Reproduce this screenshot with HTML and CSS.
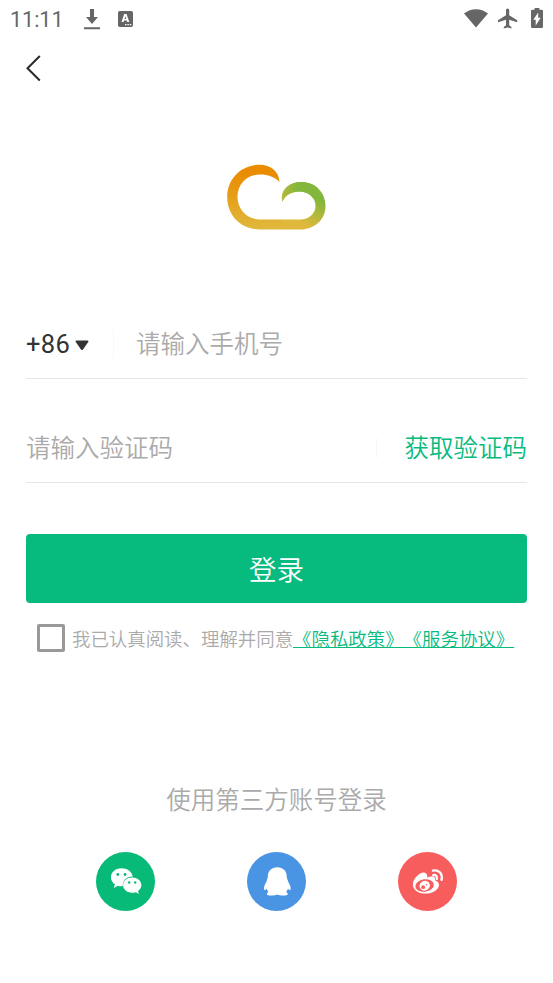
FILE: index.html
```html
<!DOCTYPE html>
<html lang="zh-CN">
<head>
<meta charset="utf-8">
<title>登录</title>
<link rel="stylesheet" href="styles.css">
</head>
<body>
<header class="status">
  <span class="clock">11:11</span>
  <svg class="download" width="16" height="21" viewBox="0 0 16 21"><path d="M6 0h4v8h4l-6 7-6-7h4zM0 18.2h16v2H0z"/></svg>
  <svg class="lang" width="15" height="16" viewBox="0 0 15 16"><rect width="15" height="16" rx="1.8"/><path class="cut" d="M6.2 3h2.3l2.8 8H9.2l-.5-1.6H6L5.500 11h-2zM7.300 5.200 6.500 8h1.700z"/><path class="cut" d="M7 13h1.500v1.300H7zm2.400 0h1.500v1.300H9.400zm2.400 0h1.500v1.300h-1.500z"/></svg>
  <span class="system">
    <svg width="24" height="19" viewBox="0 0 24 19"><path d="M0 4.500C7-1.300 17-1.300 24 4.500L12 18.500z"/></svg>
    <svg width="21" height="21" viewBox="0 0 21 21"><path d="M20.200 14.300v-2l-8-5V2.100a1.600 1.600 0 0 0-3.200 0v5.200l-8 5v2L9 11.800v5.500l-2.200 1.600v1.500l3.800-1 3.800 1v-1.500l-2.200-1.600v-5.500z"/></svg>
    <svg width="12" height="20" viewBox="0 0 12 20"><path d="M3.600 0h4.800v1.800h2.300A1.300 1.300 0 0 1 12 3.100v15.600a1.300 1.300 0 0 1-1.300 1.300H1.300A1.300 1.300 0 0 1 0 18.700V3.100a1.300 1.300 0 0 1 1.300-1.300h2.300z"/><path class="cut" d="M7.200 4.500v5.300h2.500L4.700 17.500v-5.700H2.300z"/></svg>
  </span>
</header>
<nav class="nav"><svg width="16" height="28" viewBox="0 0 16 28"><path d="M14.800 2 2.500 14.300 14.800 26.500"/></svg></nav>
<main>
  <svg class="logo" width="120" height="85" viewBox="0 0 120 85">
    <defs>
      <linearGradient id="warm" x1="0" y1="10" x2="0" y2="74" gradientUnits="userSpaceOnUse"><stop offset=".12" stop-color="#e98c00"/><stop offset="1" stop-color="#e0b93c"/></linearGradient>
      <linearGradient id="fresh" x1="100" y1="42" x2="85" y2="68" gradientUnits="userSpaceOnUse"><stop offset="0" stop-color="#83b73b"/><stop offset="1" stop-color="#e0b93c"/></linearGradient>
      <linearGradient id="fade" x1="64" y1="0" x2="94" y2="0" gradientUnits="userSpaceOnUse"><stop offset="0" stop-color="#c0b83b"/><stop offset=".55" stop-color="#83b73b"/></linearGradient>
      <clipPath id="tip"><path d="M64 25h38v18H86v6H64z"/></clipPath>
      <path id="right" d="M65 74.500h19c15 0 25.500-10 25.500-23.500C109.500 37 99 27 85 27 72 27 63.500 37 66.500 46.500 69 40 76 36.500 83 36.500c10 0 16.500 6.500 16.500 14.500 0 7.500-6.500 13.500-15.500 13.500H65z"/>
    </defs>
    <path fill="url(#warm)" d="M63.500 27C63 16 54 9.800 44 9.800 25 9.800 11.200 24 11.200 42c0 18.500 13.800 32.500 32.800 32.500h21.500v-10H44C31 64.500 21.500 54 21.500 42 21.500 29 31 19.500 44 19.500c8 0 15 2.500 19.500 7.500z"/>
    <use href="#right" fill="url(#fresh)"/>
    <use href="#right" fill="url(#fade)" clip-path="url(#tip)"/>
  </svg>
  <form class="form">
    <div class="field">
      <span class="code">+86</span>
      <svg class="caret" width="14" height="11" viewBox="0 0 14 11"><path d="M1.500.5h11c1 0 1.300.9.700 1.600L8 9.400c-.6.800-1.400.8-2 0L.8 2.100C.2 1.400.5.500 1.500.5z"/></svg>
      <span class="rule phone-rule"></span>
      <span class="hint">请输入手机号</span>
    </div>
    <div class="field verify">
      <span class="hint">请输入验证码</span>
      <span class="rule verify-rule"></span>
      <span class="get">获取验证码</span>
    </div>
    <div class="login">登录</div>
    <div class="agree"><span class="box"></span><span>我已认真阅读、理解并同意</span><a>《隐私政策》《服务协议》</a></div>
  </form>
  <p class="other">使用第三方账号登录</p>
  <div class="social">
    <span class="round wechat"><svg width="59" height="59" viewBox="0 0 59 59"><path class="w" d="M25.500 16.200c-6.200 0-10.600 4-10.600 9 0 3 1.600 5.500 4 7.100L17.800 36l4.100-2.300c1.500.5 3 .6 4.900.4-.5-6 4-9.800 10-9.700-.9-4.800-5.500-8.200-11.300-8.200z"/><path class="w" d="M36.200 25.400c-5.300 0-9.200 3.400-9.200 7.700s3.900 7.700 9.200 7.700c1.300 0 2.500-.2 3.600-.6l3.100 1.900-.9-3.200c2.200-1.400 3.400-3.500 3.400-5.800 0-4.300-4-7.700-9.200-7.700z"/><g fill="#07ba78"><circle cx="21.800" cy="22.500" r="1.400"/><circle cx="29" cy="22.500" r="1.400"/><circle cx="33.200" cy="30.500" r="1.200"/><circle cx="39.200" cy="30.500" r="1.200"/></g></svg></span>
    <span class="round qq"><svg width="59" height="59" viewBox="0 0 59 59"><path class="w" d="M30.300 15.300c-6 0-9.800 4.200-9.500 10.200-.2 1.500-1.200 2.300-1.200 4-2 3-3 6-2.500 8 .4 1.200 1.600.3 2.500-1.100.3 1.300.9 2.500 1.900 3.500-2.300 1-2.300 3.300.7 3.500 3 .3 6 .1 8.100-1 2.100 1.100 5.200 1.300 8.100 1 3-.2 3-2.500.7-3.500 1-1 1.600-2.200 1.900-3.500.9 1.400 2.100 2.300 2.500 1.100.5-2-.5-5-2.500-8 0-1.700-1-2.500-1.200-4 .3-6-3.500-10.200-9.500-10.200z"/></svg></span>
    <span class="round weibo"><svg width="59" height="59" viewBox="0 0 59 59"><path class="w" d="M27.700 21.200c-1.900-1.800-6.700.3-9.900 4.100-6.200 7.300-2 16.300 9.500 16.300 8 0 13.700-4.500 13.700-8.700 0-2.500-1.900-3.900-4-4.600.9-3.200-1.300-5-7.900-2.600.6-2 .1-3.500-1.400-4.500z"/><ellipse cx="26.600" cy="33.500" rx="9.300" ry="6.200" fill="#f85d5d" transform="rotate(-7 26.600 33.500)"/><ellipse class="w" cx="26.700" cy="33.700" rx="5.300" ry="4.800" transform="rotate(-20 26.700 33.700)"/><circle cx="25.200" cy="35.200" r="1.900" fill="#f85d5d"/><circle cx="28.400" cy="32.700" r=".8" fill="#f85d5d"/><path class="arc" d="M34.800 18.600c5.500-1.200 10.300 3 8.700 9.300M35.200 23.200c2.500-.7 4.300 1 3.600 3.700"/></svg></span>
  </div>
</main>
</body>
</html>
```
FILE: styles.css
```css
* { box-sizing: border-box; }
body {
  margin: 0;
  height: 983px;
  overflow: hidden;
  background: #fff;
  color: #333;
  font-family: Roboto, "Noto Sans CJK SC", sans-serif;
  text-spacing-trim: space-all;
}
svg { display: block; flex: none; }
.status {
  display: flex;
  align-items: center;
  height: 38px;
  padding: 0 10px;
  fill: #666;
}
.clock { width: 53px; padding-top: 1px; font-size: 21.5px; line-height: 38px; color: #666; white-space: nowrap; }
.download { margin-left: 21px; }
.lang { margin-left: 18px; }
.cut { fill: #fff; }
.system { display: flex; align-items: center; margin-left: auto; gap: 9px; }
.system svg:last-child { margin-left: 4px; }
.system svg:nth-child(2) { margin-top: -1px; }
.system svg:first-child { margin-top: -2px; }
.system svg:last-child { margin-top: -2px; }
.nav { height: 60px; padding: 16px 0 0 25px; }
.nav path { fill: none; stroke: #292929; stroke-width: 2; }
.logo { margin: 57px 0 0 216px; }
.form { padding: 0 26px; margin-top: 68px; }
.field { display: flex; align-items: center; height: 71px; padding-top: 1px; border-bottom: 1px solid #e6e6e6; font-size: 24.5px; line-height: 36px; }
.code { font-size: 25.500px; width: 45px; letter-spacing: .4px; }
.caret { margin: 3px 0 0 4px; fill: #333; }
.rule { width: 1px; background: #f8f8f8; }
.phone-rule { height: 30px; margin: 0 22px 0 24px; }
.hint { color: #aaa; }
.hint, .get, .login, .agree, .other { font-family: "Noto Sans CJK SC DemiLight", "Noto Sans CJK SC", sans-serif; font-weight: 350; }
.hint, .get { margin-top: -2px; }
.verify { height: 104px; padding-top: 34px; }
.verify-rule { height: 20px; margin-left: auto; margin-right: 28px; }
.get { color: #07ba7e; }
.login { height: 69px; margin-top: 51px; border-radius: 4px; background: #07ba7e; color: #fff; font-size: 27.5px; line-height: 68px; text-align: center; }
.agree { display: flex; align-items: center; height: 30px; margin-top: 20px; padding-left: 11px; font-size: 18.430px; line-height: 28px; color: #aaa; white-space: nowrap; }
.agree span:nth-child(2), .agree a { margin-top: -1px; }
.agree a { color: #07ba7e; text-decoration: underline; text-decoration-thickness: 1px; }
.box { width: 28px; height: 28px; margin-right: 7px; border: 3px solid #999; border-radius: 2px; }
.other { margin: 128px 0 0; font-size: 24.5px; line-height: 36px; text-align: center; color: #aaa; }
.social { display: flex; justify-content: space-between; margin-top: 35px; padding: 0 96px; }
.round { width: 59px; height: 59px; border-radius: 50%; }
.w { fill: #fff; }
.wechat { background: #07ba78; }
.qq { background: #4a94e4; }
.weibo { background: #f85d5d; }
.arc { fill: none; stroke: #fff; stroke-width: 2.300; stroke-linecap: round; }
```
